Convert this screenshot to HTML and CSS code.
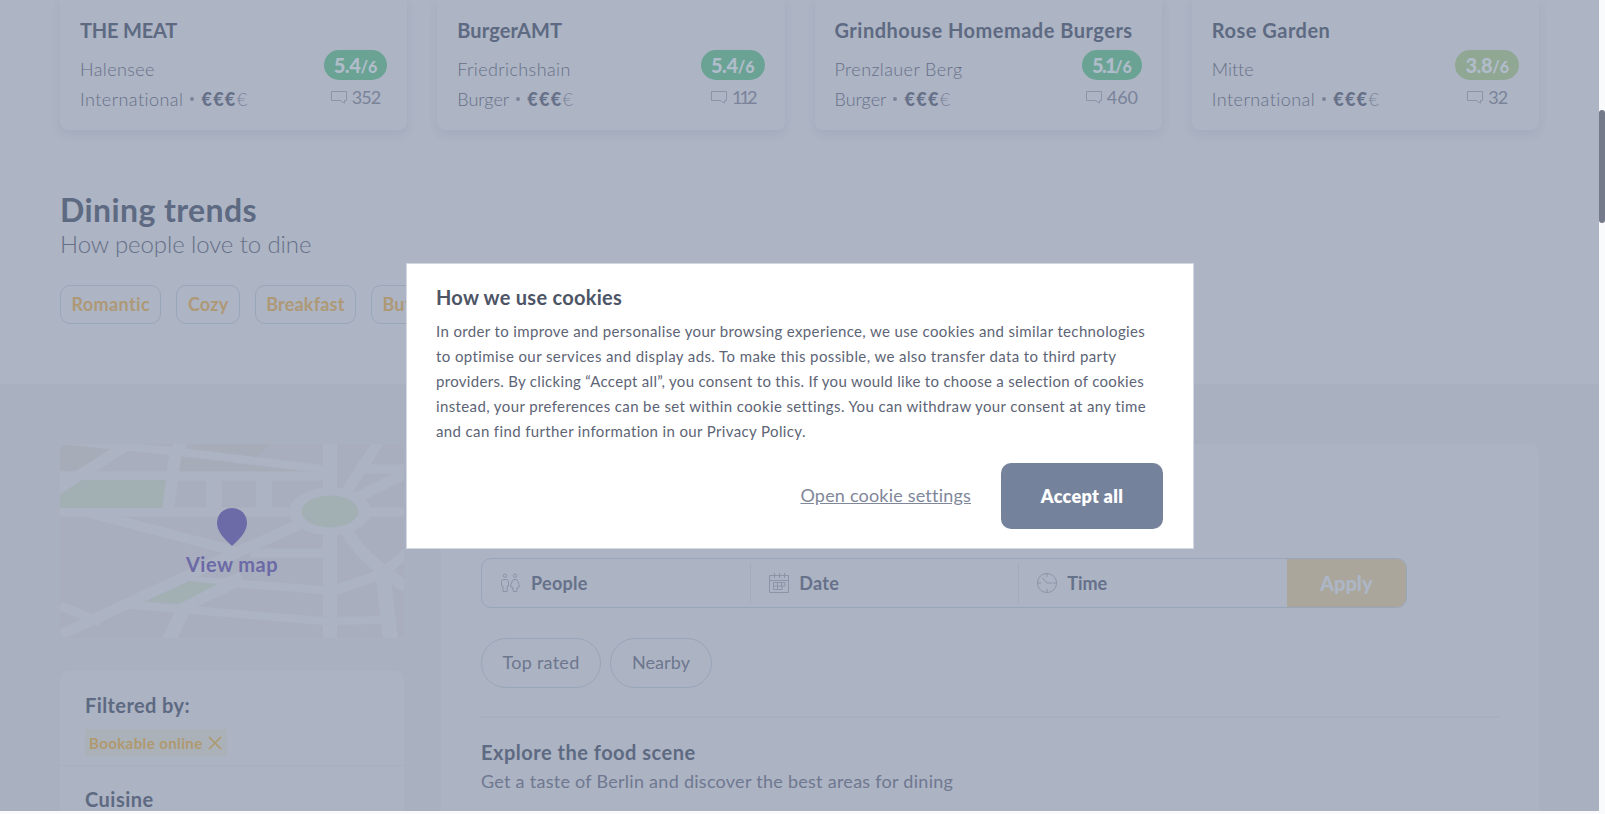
FILE: index.html
```html
<!DOCTYPE html>
<html lang="en">
<head>
<meta charset="utf-8">
<title>Restaurants in Berlin</title>
<link rel="stylesheet" href="styles.css">
</head>
<body>
<svg class="defs" aria-hidden="true">
  <symbol id="bubble" viewBox="0 0 16 14"><path d="M.5 1.5h15v9h-2v2.6l-4.300-2.600H.5z" fill="none" stroke="currentColor"/></symbol>
</svg>
<div class="app">
<div class="page">
  <section class="cards">
    <article class="card">
      <h3 class="card-title t-meat">THE MEAT</h3>
      <div class="card-body">
        <div class="info"><p class="t-loc">Halensee</p><p><span class="t-int">International</span><i class="dot"></i><b>€€€</b><span class="eur">€</span></p></div>
        <div class="score"><div class="badge"><b>5.4</b><small>/6</small></div><div class="count"><svg class="bubble"><use href="#bubble"/></svg><span class="n-tight">352</span></div></div>
      </div>
    </article>
    <article class="card">
      <h3 class="card-title t-amt">BurgerAMT</h3>
      <div class="card-body">
        <div class="info"><p class="t-loc">Friedrichshain</p><p><span>Burger</span><i class="dot"></i><b>€€€</b><span class="eur">€</span></p></div>
        <div class="score"><div class="badge"><b>5.4</b><small>/6</small></div><div class="count"><svg class="bubble"><use href="#bubble"/></svg><span class="n-ones">112</span></div></div>
      </div>
    </article>
    <article class="card">
      <h3 class="card-title">Grindhouse Homemade Burgers</h3>
      <div class="card-body">
        <div class="info"><p class="t-loc">Prenzlauer Berg</p><p><span>Burger</span><i class="dot"></i><b>€€€</b><span class="eur">€</span></p></div>
        <div class="score"><div class="badge"><b class="n-one">5.1</b><small>/6</small></div><div class="count"><svg class="bubble"><use href="#bubble"/></svg><span>460</span></div></div>
      </div>
    </article>
    <article class="card">
      <h3 class="card-title">Rose Garden</h3>
      <div class="card-body">
        <div class="info"><p>Mitte</p><p><span class="t-int">International</span><i class="dot"></i><b>€€€</b><span class="eur">€</span></p></div>
        <div class="score"><div class="badge olive"><b>3.8</b><small>/6</small></div><div class="count"><svg class="bubble"><use href="#bubble"/></svg><span class="n-tight">32</span></div></div>
      </div>
    </article>
  </section>

  <section class="trends">
    <h2>Dining trends</h2>
    <p class="sub">How people love to dine</p>
    <div class="tags"><a class="t-rom">Romantic</a><a>Cozy</a><a>Breakfast</a><a>Buffet</a></div>
  </section>

  <section class="results">
    <aside>
      <div class="map">
        <svg class="map-art" viewBox="0 0 344 194">
          <rect width="344" height="194" fill="#a8aebe"/>
          <path d="M0 0L12 0 56 5 20 29 0 26zM138 0H210L197 13 128 5zM122 13L258 29 120 27z" fill="#a6adb8"/>
          <g fill="none" stroke="#acb3c3">
            <path d="M0-4L130 9 270 26" stroke-width="8"/>
            <path d="M0 32H264" stroke-width="9"/>
            <path d="M0 68H234M306 68H344M303 25H344M190 109H264" stroke-width="9"/>
            <path d="M-4 46L78-6" stroke-width="11"/>
            <path d="M123-5Q114 8 113 28L108 66" stroke-width="12"/>
            <path d="M154 32V68M204 32V68" stroke-width="15.500"/>
            <path d="M270 0V54M270 86V194" stroke-width="14"/>
            <path d="M285 50L321-6M296 54L348 28" stroke-width="11"/>
            <path d="M30 69L178 108" stroke-width="10"/>
            <path d="M178 108L240 80" stroke-width="11"/>
            <path d="M0 191L178 108" stroke-width="11"/>
            <path d="M130 136L263 146" stroke-width="8"/>
            <path d="M60 160L263 177 322 176" stroke-width="8"/>
            <path d="M0 162L40 178" stroke-width="9"/>
            <path d="M108 198L126 160 182 134" stroke-width="14"/>
            <path d="M285 84Q300 114 348 144" stroke-width="12"/>
            <path d="M270 148L322 130 348 108" stroke-width="10"/>
            <path d="M322 124L331 198" stroke-width="15"/>
          </g>
          <ellipse cx="270" cy="67.500" rx="41" ry="24" fill="#acb3c3"/>
          <g fill="#a2afb3">
            <ellipse cx="270" cy="67.500" rx="28.500" ry="16"/>
            <path d="M0 51L23 36H106L102 64H0zM86 157L130 137 158 140 119 160z"/>
          </g>
        </svg>
        <div class="map-label">
          <svg class="pin" viewBox="0 0 30 38"><path d="M15 0C6.500 0 0 6.500 0 15c0 8 7 16 15 23 8-7 15-15 15-23C30 6.500 23.500 0 15 0z" fill="#6d6ba7"/></svg>
          <span>View map</span>
        </div>
      </div>
      <div class="filters">
        <div class="block">
          <h4 class="t-filt">Filtered by:</h4>
          <div class="chosen"><span>Bookable online</span><svg viewBox="0 0 14 14"><path d="M1 1l12 12M13 1L1 13" fill="none" stroke="#b0996f" stroke-width="1.700"/></svg></div>
        </div>
        <div class="block"><h4>Cuisine</h4></div>
      </div>
    </aside>
    <main>
      <div class="search">
        <div class="cell">
          <svg viewBox="0 0 20 20"><g fill="none" stroke="currentColor"><circle cx="4" cy="2.700" r="1.700"/><circle cx="14" cy="2.700" r="1.700"/><path d="M2.500 6.500h3q2 0 2 2v4.500h-1.300v5.500h-4.200v-5.500H.5V8.500q0-2 2-2zM13 6.500h2q1.200 0 1.700 1.500l2 5.500-2 .5.300 1.500h-1.200v3h-3.600v-3h-1.200l.3-1.500-2-.5 2-5.500Q11.800 6.500 13 6.500z"/></g></svg>
          <span>People</span>
        </div>
        <div class="cell">
          <svg viewBox="0 0 20 20"><path d="M.5 2.500h19v17H.5zM.5 7.500h19M5.500 0v5M10.500 0v5M15.500 0v5M4.500 9.500h11.500v3.500h-3v3.500H4.500zM4.500 13H13M8.500 9.500v7M12.500 9.500V13" fill="none" stroke="currentColor"/></svg>
          <span>Date</span>
        </div>
        <div class="cell">
          <svg viewBox="0 0 20 20"><path d="M10 .5a9.500 9.500 0 1 0 .01 0M10 0v4M10 16v4M0 10h4M16 10h4M5.500 5l4.500 5h5" fill="none" stroke="currentColor"/></svg>
          <span class="t-time">Time</span>
        </div>
        <div class="apply">Apply</div>
      </div>
      <div class="pills"><a>Top rated</a><a class="t-near">Nearby</a></div>
      <hr>
      <h4>Explore the food scene</h4>
      <p class="lead">Get a taste of Berlin and discover the best areas for dining</p>
    </main>
  </section>
</div>
<div class="scroll"><div class="thumb"></div></div>
</div>

<div class="dialog">
  <h4>How we use cookies</h4>
  <p class="copy"><span class="l1">In order to improve and personalise your browsing experience, we use cookies and similar technologies</span> <span class="l2">to optimise our services and display ads. To make this possible, we also transfer data to third party</span> <span class="l3">providers. By clicking “Accept all”, you consent to this. If you would like to choose a selection of cookies</span> <span class="l4">instead, your preferences can be set within cookie settings. You can withdraw your consent at any time</span> <span class="l5">and can find further information in our Privacy Policy.</span></p>
  <div class="actions"><a>Open cookie settings</a><button>Accept all</button></div>
</div>
</body>
</html>
```
FILE: styles.css
```css
* { box-sizing: border-box; margin: 0; padding: 0; }
body {
  height: 814px;
  overflow: hidden;
  background: #f9fafb;
  font: 18px/30px Lato, "Open Sans", sans-serif;
  font-variant-ligatures: none;
  color: #7a8399;
}
h2, h3, h4 { font-weight: 700; color: #5d6a82; }
h3, h4 { font-size: 20px; line-height: 24px; letter-spacing: .5px; white-space: nowrap; }
.defs { display: none; }
.app { display: flex; height: 814px; }
.page { width: 1599px; height: 811px; overflow: hidden; background: #adb4c4; }
.scroll { width: 6px; padding-top: 110px; }
.thumb { height: 113px; background: #747a8a; border-radius: 3px; }

/* restaurant cards */
.cards { display: grid; grid-template-columns: repeat(4, 1fr); gap: 30px; padding: 0 60px; }
.card {
  height: 130px;
  padding: 18px 20px 0;
  border-radius: 0 0 8px 8px;
  box-shadow: 0 4px 10px rgba(90, 100, 125, .11);
}
.t-meat { letter-spacing: -.2px; }
.t-amt { letter-spacing: .1px; }
.card-body { display: flex; justify-content: space-between; }
.info { padding-top: 12px; font-weight: 300; }
.info p { display: flex; align-items: center; color: #667088; }
.info b { font-weight: 900; letter-spacing: 1.300px; color: #667189; }
.t-loc { letter-spacing: .4px; }
.t-int { letter-spacing: .45px; }
.dot { width: 4px; height: 4px; margin: 0 7px; border-radius: 50%; background: #7a8399; }
.eur { color: #7a8399; }
.score { display: flex; flex-direction: column; align-items: center; padding-top: 8px; }
.badge {
  display: flex;
  align-items: baseline;
  height: 30px;
  padding: 0 10px;
  border-radius: 15px;
  background: #6aa394;
  color: #b1bccb;
  font-size: 20px;
  line-height: 30px;
}
.badge b { font-weight: 900; letter-spacing: -.4px; }
.badge .n-one { letter-spacing: -1.700px; }
.badge small { font-size: 16px; font-weight: 900; }
.olive { background: #90a794; }
.count { display: flex; align-items: center; gap: 5px; margin-top: 2px; }
.bubble { width: 16px; height: 14px; color: #8a95a8; }
.n-tight { letter-spacing: -1px; }
.n-ones { letter-spacing: -3px; }

/* trends */
.trends { height: 254px; padding: 61px 60px 0; }
.trends h2 { font-size: 32px; line-height: 38px; letter-spacing: .4px; }
.sub { font-size: 24px; font-weight: 300; letter-spacing: -.1px; color: #667088; }
.tags { display: flex; gap: 15px; margin-top: 26px; }
.tags a {
  height: 39px;
  padding: 0 10.4px;
  border: 1px solid #98a6b9;
  border-radius: 10px;
  font-weight: 700;
  line-height: 36px;
  letter-spacing: .2px;
  color: #ae9977;
}
.tags .t-rom { letter-spacing: .4px; }

/* results */
.results {
  display: grid;
  grid-template-columns: 344px 1098px;
  gap: 37px;
  height: 430px;
  padding: 60px 60px 0;
  background: #a9b0c0;
}
.map { display: grid; height: 194px; border-radius: 8px; overflow: hidden; }
.map-art, .map-label { grid-area: 1 / 1; }
.map-art { width: 344px; height: 194px; }
.map-label {
  display: flex;
  flex-direction: column;
  align-items: center;
  padding-top: 64px;
  font-size: 20px;
  font-weight: 700;
  line-height: 24px;
  letter-spacing: .46px;
  color: #6c6aa6;
}
.pin { width: 30px; height: 38px; margin-bottom: 6px; }
.filters { height: 300px; margin-top: 33px; background: #acb3c3; border-radius: 8px 8px 0 0; }
.block { padding: 22px 25px 0; }
.block + .block { padding-top: 21px; border-top: 1px solid #a8afc0; }
.block:first-child { height: 94px; }
.t-filt { letter-spacing: .4px; }
.chosen {
  display: flex;
  align-items: center;
  gap: 5px;
  width: 142px;
  height: 27px;
  margin-top: 12px;
  padding-left: 4px;
  border-radius: 3px;
  background: #aab1b9;
  font-size: 15px;
  font-weight: 700;
  line-height: 26px;
  letter-spacing: .4px;
  white-space: nowrap;
  color: #b0996f;
}
.chosen svg { width: 14px; height: 14px; }
main { height: 367px; padding: 114px 40px 0; background: #acb3c3; border-radius: 8px 8px 0 0; }
.search {
  display: flex;
  width: 926px;
  height: 50px;
  border: 1px solid #98a6b9;
  border-radius: 10px;
  overflow: hidden;
}
.cell {
  display: flex;
  flex: 1;
  align-items: center;
  gap: 10px;
  height: 40px;
  margin-top: 4px;
  padding-left: 19px;
  font-weight: 700;
  letter-spacing: .3px;
  color: #66718a;
}
.cell span { padding-bottom: 1px; }
.cell .t-time { letter-spacing: -.1px; }
.cell + .cell { padding-left: 18px; border-left: 1px solid #a2acbc; }
.cell svg { width: 20px; height: 20px; color: #8c94a8; }
.apply {
  width: 119.500px;
  background: #aaa69b;
  font-size: 20px;
  font-weight: 900;
  line-height: 48px;
  text-align: center;
  color: #adb6c6;
}
.pills { display: flex; gap: 9px; margin-top: 30px; }
.pills a {
  width: 120px;
  height: 50px;
  border: 1px solid #98a6b9;
  border-radius: 25px;
  line-height: 47px;
  letter-spacing: .27px;
  text-align: center;
  color: #6d778e;
}
.pills .t-near { width: 102px; letter-spacing: .07px; }
hr { height: 2px; margin: 28px 0 22px; border: 0; background: #a6b0c0; }
.lead { margin-top: 2px; letter-spacing: .27px; white-space: nowrap; color: #6f7890; }

/* cookie dialog */
.dialog {
  position: fixed;
  left: 406px;
  top: 263px;
  width: 788px;
  height: 286px;
  padding: 21px 30px 0 29px;
  border: 1px solid #d3d8e1;
  background: #fff;
}
.dialog h4 { letter-spacing: .27px; color: #4d5566; }
.copy { margin-top: 10px; font-size: 15px; line-height: 25px; color: #5d6475; }
.copy span { display: block; white-space: nowrap; }
.l1 { letter-spacing: .36px; }
.l2 { letter-spacing: .4px; }
.l3 { letter-spacing: .31px; }
.l4 { letter-spacing: .38px; }
.l5 { letter-spacing: .37px; }
.actions { display: flex; justify-content: flex-end; align-items: center; gap: 30px; margin-top: 19px; }
.actions a { padding-bottom: 2px; letter-spacing: .2px; text-decoration: underline; color: #80879a; }
.actions button {
  width: 162px;
  height: 66px;
  border: 0;
  border-radius: 10px;
  background: #75829b;
  font: 800 18px/30px Lato, sans-serif;
  letter-spacing: .3px;
  color: #fff;
}
```
